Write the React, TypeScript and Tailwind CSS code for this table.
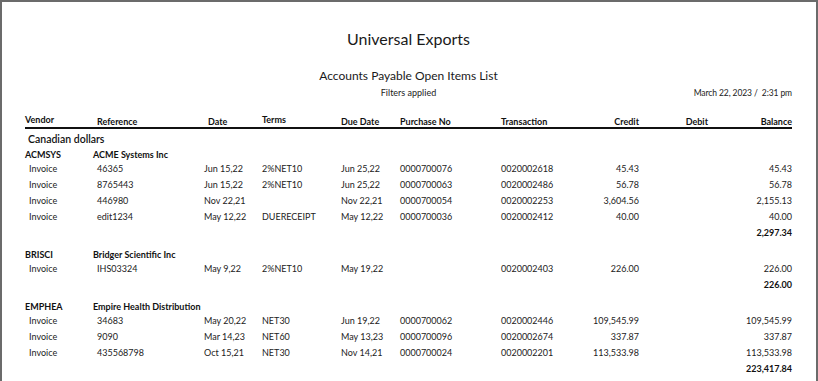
import React from "react";

type Item = {
  ref: string;
  date: string;
  terms: string;
  due: string;
  po: string;
  txn: string;
  credit: string;
  balance: string;
};

type Vendor = { code: string; name: string; items: Item[]; total: string };

const vendors: Vendor[] = [
  {
    code: "ACMSYS",
    name: "ACME Systems Inc",
    total: "2,297.34",
    items: [
      { ref: "46365", date: "Jun 15,22", terms: "2%NET10", due: "Jun 25,22", po: "0000700076", txn: "0020002618", credit: "45.43", balance: "45.43" },
      { ref: "8765443", date: "Jun 15,22", terms: "2%NET10", due: "Jun 25,22", po: "0000700063", txn: "0020002486", credit: "56.78", balance: "56.78" },
      { ref: "446980", date: "Nov 22,21", terms: "", due: "Nov 22,21", po: "0000700054", txn: "0020002253", credit: "3,604.56", balance: "2,155.13" },
      { ref: "edit1234", date: "May 12,22", terms: "DUERECEIPT", due: "May 12,22", po: "0000700036", txn: "0020002412", credit: "40.00", balance: "40.00" },
    ],
  },
  {
    code: "BRISCI",
    name: "Bridger Scientific Inc",
    total: "226.00",
    items: [
      { ref: "IHS03324", date: "May 9,22", terms: "2%NET10", due: "May 19,22", po: "", txn: "0020002403", credit: "226.00", balance: "226.00" },
    ],
  },
  {
    code: "EMPHEA",
    name: "Empire Health Distribution",
    total: "223,417.84",
    items: [
      { ref: "34683", date: "May 20,22", terms: "NET30", due: "Jun 19,22", po: "0000700062", txn: "0020002446", credit: "109,545.99", balance: "109,545.99" },
      { ref: "9090", date: "Mar 14,23", terms: "NET60", due: "May 13,23", po: "0000700096", txn: "0020002674", credit: "337.87", balance: "337.87" },
      { ref: "435568798", date: "Oct 15,21", terms: "NET30", due: "Nov 14,21", po: "0000700024", txn: "0020002201", credit: "113,533.98", balance: "113,533.98" },
    ],
  },
];

const cols = "grid grid-cols-[72px_107px_58px_79px_59px_101px_78px_60px_69px_84px]";

function HeaderRow() {
  return (
    <div className={`${cols} h-[15px] items-end border-b-2 border-[#111] text-[9px] font-bold leading-[11px] text-[#111]`}>
      <span className="pb-[2px]">Vendor</span>
      <span>Reference</span>
      <span className="pl-[4px]">Date</span>
      <span className="pb-[2px]">Terms</span>
      <span>Due Date</span>
      <span>Purchase No</span>
      <span>Transaction</span>
      <span className="text-right">Credit</span>
      <span className="text-right">Debit</span>
      <span className="text-right">Balance</span>
    </div>
  );
}

function ItemRow({ item }: { item: Item }) {
  return (
    <div className={`${cols} h-[16px] items-center text-[9px] leading-[16px] text-[#222]`}>
      <span className="pl-[4px]">Invoice</span>
      <span>{item.ref}</span>
      <span>{item.date}</span>
      <span>{item.terms}</span>
      <span>{item.due}</span>
      <span>{item.po}</span>
      <span>{item.txn}</span>
      <span className="text-right">{item.credit}</span>
      <span className="text-right"></span>
      <span className="text-right">{item.balance}</span>
    </div>
  );
}

function VendorGroup({ vendor, first }: { vendor: Vendor; first: boolean }) {
  return (
    <div className={first ? "" : "mt-[7px]"}>
      <div className="flex h-[13px] items-center text-[9px] font-bold leading-[13px] text-[#111]">
        <span className="w-[68px]">{vendor.code}</span>
        <span>{vendor.name}</span>
      </div>
      {vendor.items.map((item) => (
        <ItemRow key={item.txn} item={item} />
      ))}
      <div className="flex h-[16px] items-center justify-end text-[9px] font-bold leading-[16px] text-[#111]">
        {vendor.total}
      </div>
    </div>
  );
}

export default function App() {
  return (
    <div
      className="h-[381px] w-[818px] overflow-hidden border-2 border-b-0 border-[#6b6b6b] bg-white pl-[23px] pr-[24px] text-[#222]"
      style={{ fontFamily: "Lato, 'Open Sans', sans-serif" }}
    >
      <div className="pt-[27px] text-center text-[16px] leading-[20px] text-[#1a1a1a]">Universal Exports</div>
      <div className="mt-[19px] text-center text-[12px] leading-[16px] text-[#1a1a1a]">
        Accounts Payable Open Items List
      </div>
      <div className="mt-[3px] grid grid-cols-[1fr_auto_1fr] text-[9px] leading-[12px]">
        <span></span>
        <span className="text-center">Filters applied</span>
        <span className="whitespace-pre text-right text-[8.5px] tracking-[-0.1px]">March 22, 2023 /  2:31 pm</span>
      </div>
      <div className="mt-[15px]">
        <HeaderRow />
      </div>
      <div className="mt-[2px] flex h-[17px] items-center pl-[3px] text-[10.5px] font-semibold leading-[17px] text-[#111]">
        Canadian dollars
      </div>
      {vendors.map((v, i) => (
        <VendorGroup key={v.code} vendor={v} first={i === 0} />
      ))}
    </div>
  );
}
